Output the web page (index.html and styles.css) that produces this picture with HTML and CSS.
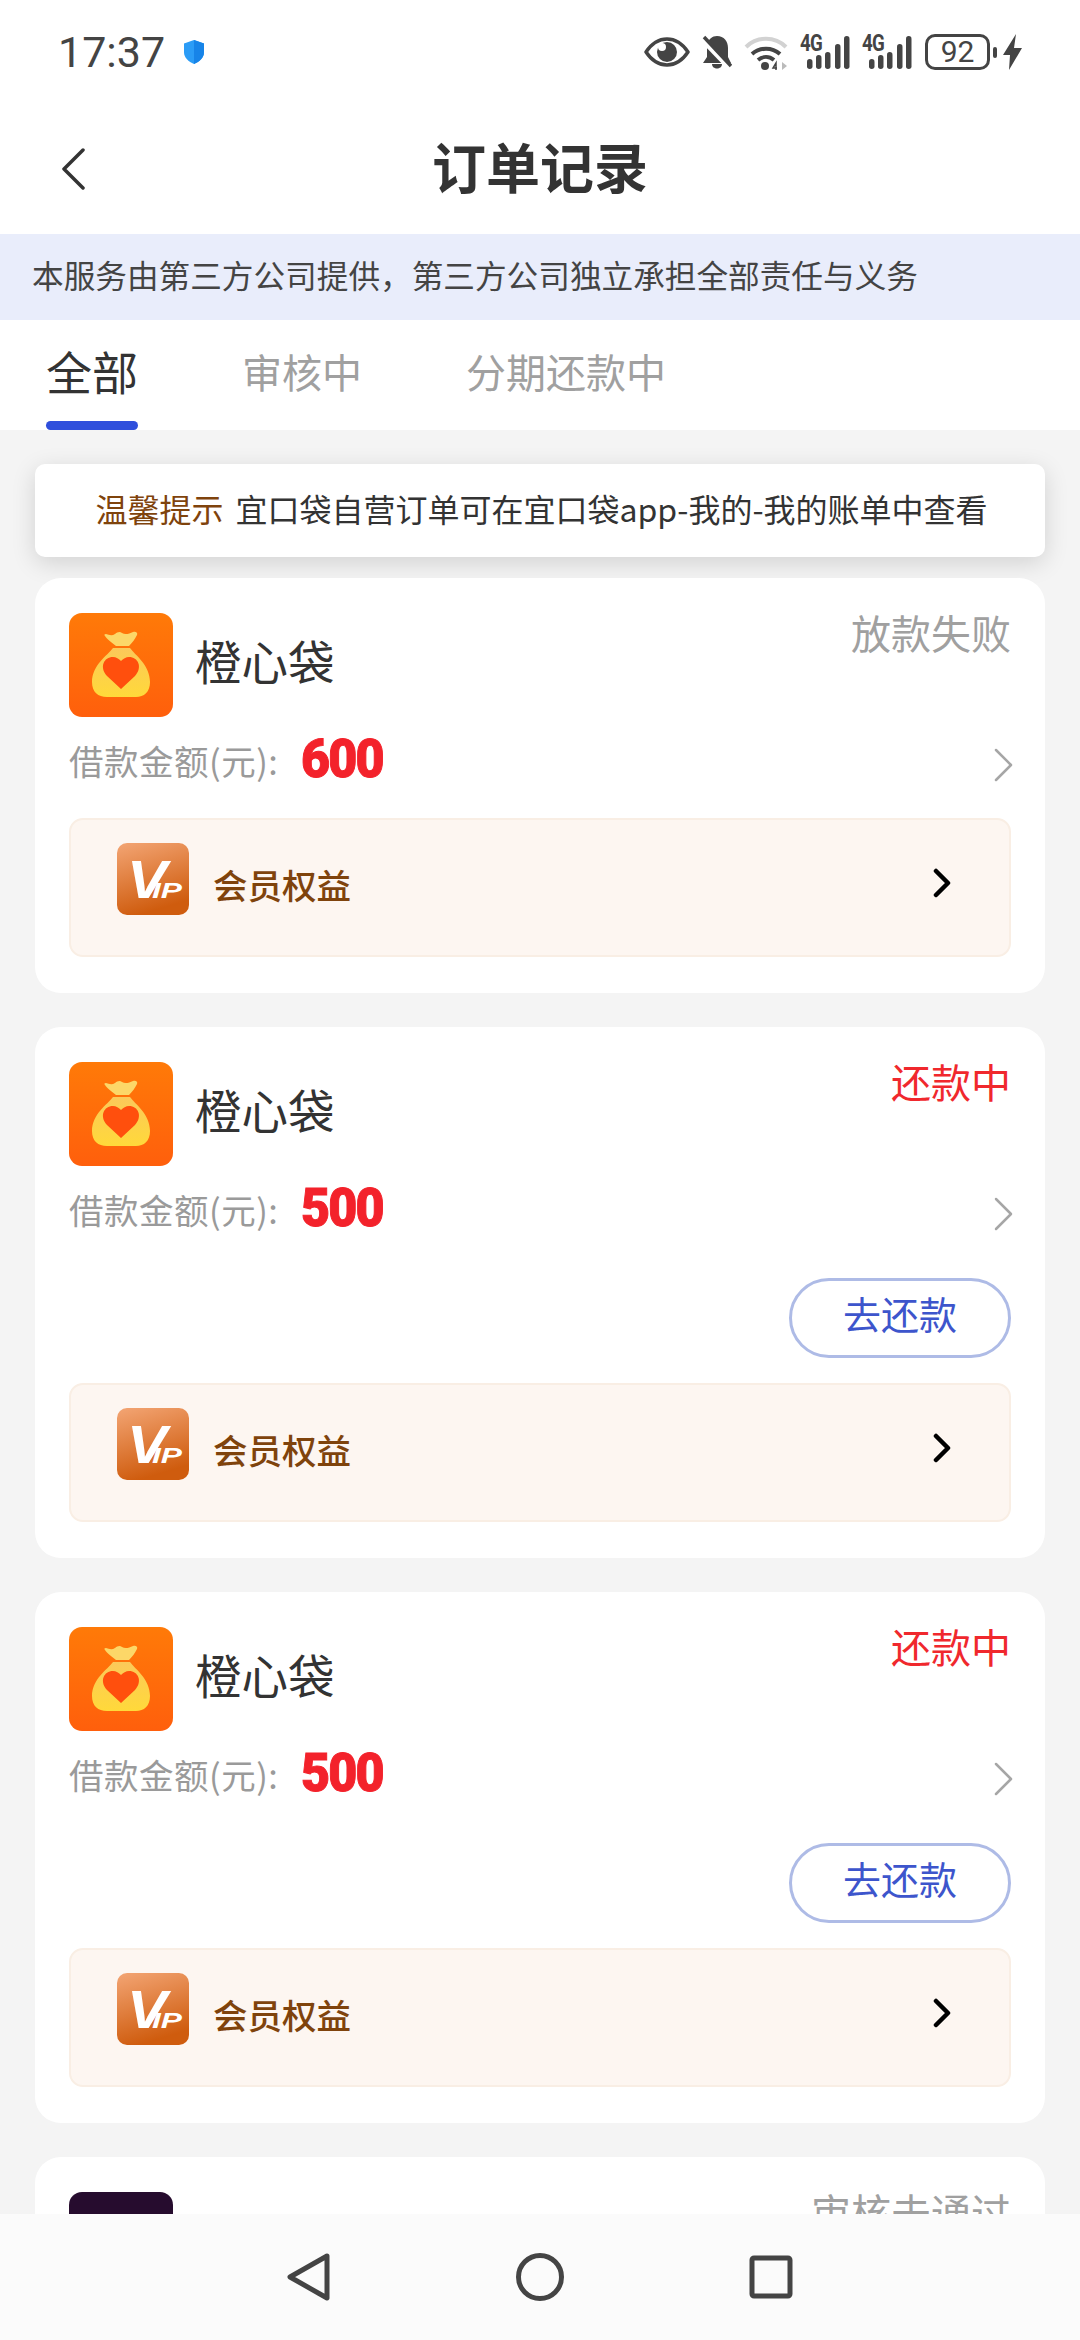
FILE: index.html
```html
<!DOCTYPE html>
<html lang="zh-CN">
<head>
<meta charset="utf-8">
<title>订单记录</title>
<link rel="stylesheet" href="styles.css">
</head>
<body>
<svg class="defs" width="0" height="0" aria-hidden="true">
  <defs>
    <linearGradient id="bagBg" x1="0" y1="0" x2="0" y2="1"><stop offset="0" stop-color="#ff7a08"/><stop offset="1" stop-color="#ff5f0c"/></linearGradient>
    <linearGradient id="bagFill" x1="0" y1="0" x2="0" y2="1"><stop offset="0" stop-color="#fbc95a"/><stop offset="1" stop-color="#ffd93a"/></linearGradient>
    <linearGradient id="vipBg" x1="0" y1="0" x2="0.3" y2="1"><stop offset="0" stop-color="#f3a574"/><stop offset="1" stop-color="#cf5c0e"/></linearGradient>
    <symbol id="bag" viewBox="0 0 104 104">
      <rect width="104" height="104" rx="13" fill="url(#bagBg)"/>
      <path d="M37 21c3 1 6 2 9 0 2-2 5-3 7-1 3 2 7 1 11-1 3-1 5 1 4 3-2 4-5 8-8 11H47c-4-3-9-7-11-10-1-1-1-2 1-2z" fill="#fcd768"/>
      <path d="M44 35h17c5 7 20 17 20 34 0 10-6 15-14 15H38c-9 0-15-5-15-15 0-17 16-27 21-34z" fill="url(#bagFill)"/>
      <path d="M52 76 38 63c-8-9-3-19 6-19 3 0 6 2 8 4 2-2 5-4 8-4 9 0 14 10 6 19z" fill="#ff4f0d"/>
    </symbol>
    <symbol id="vip" viewBox="0 0 72 72">
      <rect width="72" height="72" rx="10" fill="url(#vipBg)"/>
      <text class="vip-v" x="10" y="55" textLength="40" lengthAdjust="spacingAndGlyphs">V</text>
      <text class="vip-ip" x="35" y="55" textLength="30" lengthAdjust="spacingAndGlyphs">IP</text>
    </symbol>
  </defs>
</svg>

<div class="page">
  <header class="status">
    <div class="status-left">
      <span class="time">17:37</span>
      <svg class="shield" viewBox="0 0 22 24"><path d="M11 0l10 3.500v8.500c0 6-4.500 9.500-10 12C5.500 21.500 1 18 1 12V3.500z" fill="#2b9cf6"/><path d="M11 0l10 3.500v8.500c0 6-4.500 9.500-10 12z" fill="#1784e8"/></svg>
    </div>
    <div class="status-right">
      <svg class="ic-eye" viewBox="0 0 46 30"><path d="M2 15C8 6 15 2 23 2s15 4 21 13c-6 9-13 13-21 13S8 24 2 15z" fill="none" stroke="#444" stroke-width="3.500" stroke-linejoin="round"/><circle cx="23" cy="15" r="10" fill="#444"/><circle cx="18" cy="10" r="4" fill="#fff"/></svg>
      <svg class="ic-bell" viewBox="0 0 30 34"><path d="M15 1c7 0 11 5 11 12v9l3 6H1l4-6V9c2-5 5-8 10-8z" fill="#444"/><path d="M10 29h10c0 6-10 6-10 0z" fill="#444"/><path d="M0 5l26 27" stroke="#fff" stroke-width="4"/><path d="M2 2l27 29" stroke="#444" stroke-width="3.500"/></svg>
      <svg class="ic-wifi" viewBox="0 0 44 36"><path d="M2 13C13 2 31 2 42 13" fill="none" stroke="#d2d2d2" stroke-width="4"/><path d="M8 20c8-7 20-7 28 0" fill="none" stroke="#444" stroke-width="4"/><path d="M14 26c5-4 11-4 16 0" fill="none" stroke="#444" stroke-width="4"/><circle cx="21" cy="32" r="4" fill="#444"/><path d="M32 36v-7l-3 5h4" fill="none" stroke="#444" stroke-width="1.500"/><path d="M38 28l5 4-5 4z" fill="#bbb"/></svg>
      <div class="signal"><span class="net">4G</span><svg viewBox="0 0 50 35"><g fill="#444"><rect x="7" y="24" width="5.500" height="10" rx="2.700"/><rect x="16" y="20" width="5.500" height="14" rx="2.700"/><rect x="25" y="17" width="5.500" height="17" rx="2.700"/><rect x="35" y="9" width="5.500" height="25" rx="2.700"/><rect x="44" y="1" width="5.500" height="33" rx="2.700"/></g></svg></div>
      <div class="signal"><span class="net">4G</span><svg viewBox="0 0 50 35"><g fill="#444"><rect x="7" y="24" width="5.500" height="10" rx="2.700"/><rect x="16" y="20" width="5.500" height="14" rx="2.700"/><rect x="25" y="17" width="5.500" height="17" rx="2.700"/><rect x="35" y="9" width="5.500" height="25" rx="2.700"/><rect x="44" y="1" width="5.500" height="33" rx="2.700"/></g></svg></div>
      <div class="battery"><span class="batt-num">92</span></div>
      <span class="batt-nub"></span>
      <svg class="ic-bolt" viewBox="0 0 19 36"><path d="M13 0 0 21h7l-1 15L19 14h-8z" fill="#444"/></svg>
    </div>
  </header>

  <div class="topbar">
    <svg class="back" viewBox="0 0 24 42"><path d="M22 2 3 21l19 19" fill="none" stroke="#333" stroke-width="3.500" stroke-linecap="round" stroke-linejoin="round"/></svg>
    <h1 class="title">订单记录</h1>
  </div>

  <div class="banner">本服务由第三方公司提供，第三方公司独立承担全部责任与义务</div>

  <nav class="tabs">
    <div class="tab tab-on">全部</div>
    <div class="tab tab-two">审核中</div>
    <div class="tab tab-three">分期还款中</div>
  </nav>

  <main class="list">
    <div class="notice"><span class="notice-key">温馨提示</span><span>宜口袋自营订单可在宜口袋app-我的-我的账单中查看</span></div>

    <section class="card">
      <div class="head">
        <svg class="logo"><use href="#bag"/></svg>
        <span class="name">橙心袋</span>
        <span class="state state-grey">放款失败</span>
      </div>
      <div class="amount">
        <span class="amount-label">借款金额(元):</span>
        <span class="amount-num">600</span>
        <svg class="more" viewBox="0 0 20 34"><path d="M2 2l15 15L2 32" fill="none" stroke="#a6a6a6" stroke-width="2.500" stroke-linecap="round" stroke-linejoin="round"/></svg>
      </div>
      <div class="perk">
        <svg class="vip"><use href="#vip"/></svg>
        <span class="perk-name">会员权益</span>
        <svg class="perk-go" viewBox="0 0 18 30"><path d="M3 3l12 12L3 27" fill="none" stroke="#000" stroke-width="4.500" stroke-linecap="round" stroke-linejoin="round"/></svg>
      </div>
    </section>

    <section class="card">
      <div class="head">
        <svg class="logo"><use href="#bag"/></svg>
        <span class="name">橙心袋</span>
        <span class="state state-red">还款中</span>
      </div>
      <div class="amount">
        <span class="amount-label">借款金额(元):</span>
        <span class="amount-num">500</span>
        <svg class="more" viewBox="0 0 20 34"><path d="M2 2l15 15L2 32" fill="none" stroke="#a6a6a6" stroke-width="2.500" stroke-linecap="round" stroke-linejoin="round"/></svg>
      </div>
      <div class="actions"><span class="pay">去还款</span></div>
      <div class="perk perk-tight">
        <svg class="vip"><use href="#vip"/></svg>
        <span class="perk-name">会员权益</span>
        <svg class="perk-go" viewBox="0 0 18 30"><path d="M3 3l12 12L3 27" fill="none" stroke="#000" stroke-width="4.500" stroke-linecap="round" stroke-linejoin="round"/></svg>
      </div>
    </section>

    <section class="card">
      <div class="head">
        <svg class="logo"><use href="#bag"/></svg>
        <span class="name">橙心袋</span>
        <span class="state state-red">还款中</span>
      </div>
      <div class="amount">
        <span class="amount-label">借款金额(元):</span>
        <span class="amount-num">500</span>
        <svg class="more" viewBox="0 0 20 34"><path d="M2 2l15 15L2 32" fill="none" stroke="#a6a6a6" stroke-width="2.500" stroke-linecap="round" stroke-linejoin="round"/></svg>
      </div>
      <div class="actions"><span class="pay">去还款</span></div>
      <div class="perk perk-tight">
        <svg class="vip"><use href="#vip"/></svg>
        <span class="perk-name">会员权益</span>
        <svg class="perk-go" viewBox="0 0 18 30"><path d="M3 3l12 12L3 27" fill="none" stroke="#000" stroke-width="4.500" stroke-linecap="round" stroke-linejoin="round"/></svg>
      </div>
    </section>

    <section class="card">
      <div class="head">
        <span class="logo logo-dark"></span>
        <span class="state state-grey">审核未通过</span>
      </div>
    </section>
  </main>

  <footer class="navbar">
    <svg class="nav-ic" viewBox="0 0 48 48"><path d="M42 3 5 24l37 21z" fill="none" stroke="#444" stroke-width="5" stroke-linejoin="round"/></svg>
    <svg class="nav-ic" viewBox="0 0 48 48"><circle cx="24" cy="24" r="21.500" fill="none" stroke="#444" stroke-width="5"/></svg>
    <svg class="nav-ic" viewBox="0 0 48 48"><rect x="5" y="5" width="38" height="38" rx="2" fill="none" stroke="#444" stroke-width="5"/></svg>
  </footer>
</div>
</body>
</html>
```

FILE: styles.css
```css
* { box-sizing: border-box; margin: 0; padding: 0; }
html, body { width: 1080px; height: 2340px; overflow: hidden; }
body { font-family: "Noto Sans CJK SC", "Noto Sans", sans-serif; background: #fff; color: #333; }
.defs { position: absolute; }
.page { width: 1080px; height: 2340px; display: flex; flex-direction: column; overflow: hidden; }

.status { height: 104px; flex: none; display: flex; justify-content: space-between; align-items: center; padding: 0 58px 0 58px; }
.status-left { display: flex; align-items: center; gap: 18px; }
.time { font-family: Roboto, sans-serif; font-size: 43px; line-height: 50px; color: #444; }
.shield { width: 22px; height: 24px; }
.status-right { display: flex; align-items: center; }
.ic-eye { width: 46px; height: 30px; margin-right: 12px; }
.ic-bell { width: 30px; height: 34px; margin-right: 12px; }
.ic-wifi { width: 44px; height: 36px; margin-right: 12px; }
.signal { position: relative; width: 50px; height: 35px; margin-right: 12px; }
.signal svg { display: block; width: 50px; height: 35px; }
.net { position: absolute; left: 0; top: -4px; font-family: Roboto, sans-serif; font-size: 24px; line-height: 24px; font-weight: 700; color: #444; letter-spacing: -1px; transform: scaleX(.78); transform-origin: left center; }
.battery { width: 65px; height: 36px; border: 3px solid #444; border-radius: 10px; display: flex; align-items: center; justify-content: center; margin-left: 1px; }
.batt-num { font-family: Roboto, sans-serif; font-size: 30px; line-height: 30px; color: #444; }
.batt-nub { width: 4px; height: 11px; background: #444; border-radius: 2px; margin: 0 6px 0 3px; }
.ic-bolt { width: 19px; height: 36px; }

.topbar { height: 130px; flex: none; position: relative; display: flex; align-items: center; justify-content: center; padding-bottom: 6px; }
.back { position: absolute; left: 61px; top: 44px; width: 24px; height: 42px; }
.title { font-size: 54px; line-height: 70px; font-weight: 700; color: #333; }

.banner { height: 86px; flex: none; background: #e9edfb; padding-left: 32px; font-size: 31.650px; line-height: 80px; color: #444; white-space: nowrap; }

.tabs { height: 110px; flex: none; display: flex; align-items: flex-start; padding-left: 46px; background: #fff; }
.tab { font-size: 40px; line-height: 60px; padding-top: 21px; color: #a0a0a0; white-space: nowrap; }
.tab-on { font-size: 46px; width: 92px; color: #333; padding-top: 20px; }
.tab-on::after { content: ""; display: block; height: 9px; margin-top: 21px; border-radius: 5px; background: #2f4fdc; }
.tab-two { margin-left: 104px; }
.tab-three { margin-left: 104px; }

.list { flex: 1; min-height: 0; overflow: hidden; background: #f4f4f4; padding: 34px 35px 0; display: flex; flex-direction: column; }
.notice { height: 93px; flex: none; background: #fff; border-radius: 10px; box-shadow: 0 6px 24px rgba(0,0,0,.14); display: flex; align-items: center; justify-content: center; gap: 12px; padding: 0 0 5px 3px; font-size: 32px; line-height: 44px; color: #333; white-space: nowrap; margin-bottom: 21px; }
.notice-key { color: #7f430c; }

.card { flex: none; background: #fff; border-radius: 26px; padding: 35px 34px 36px; margin-bottom: 34px; }
.head { height: 104px; display: flex; align-items: flex-start; }
.logo { width: 104px; height: 104px; flex: none; display: block; }
.logo-dark { background: #260c2e; border-radius: 13px; }
.name { margin-left: 22px; font-size: 46.500px; line-height: 94px; color: #333; }
.state { margin-left: auto; font-size: 40px; line-height: 38px; white-space: nowrap; }
.state-grey { color: #a0a0a0; }
.state-red { color: #f0282d; }

.amount { height: 60px; margin-top: 15px; display: flex; align-items: center; }
.amount-label { font-size: 34.500px; line-height: 56px; padding-bottom: 4px; letter-spacing: .5px; color: #9a9a9a; width: 232px; white-space: nowrap; }
.amount-num { font-family: Roboto, sans-serif; font-size: 54px; line-height: 54px; margin-bottom: 6px; font-weight: 900; letter-spacing: -2px; -webkit-text-stroke: 1px #f3222b; color: #f3222b; transform: scaleX(.93); transform-origin: left center; }
.more { width: 20px; height: 34px; margin: 6px -3px 0 auto; }

.actions { margin-top: 37px; display: flex; justify-content: flex-end; }
.pay { width: 222px; height: 80px; border: 3px solid #aebbe6; border-radius: 40px; font-size: 38px; line-height: 64px; text-align: center; color: #3d55cc; }

.perk { height: 139px; margin-top: 26px; background: #fdf6f1; border: 2px solid #f9eee4; border-radius: 14px; display: flex; align-items: flex-start; padding: 23px 58px 0 46px; }
.perk-tight { margin-top: 25px; }
.vip { width: 72px; height: 72px; flex: none; display: block; }
.vip-v { font-family: "Liberation Sans", sans-serif; font-size: 54px; font-weight: 700; font-style: italic; fill: #fff; }
.vip-ip { font-family: "Liberation Sans", sans-serif; font-size: 22px; font-weight: 700; font-style: italic; fill: #fff; }
.perk-name { margin-left: 24px; font-size: 34.500px; line-height: 44px; margin-top: 19px; font-weight: 500; color: #7f430c; }
.perk-go { width: 18px; height: 30px; margin-left: auto; margin-top: 25px; }

.navbar { height: 126px; flex: none; background: #fbfbfb; display: flex; justify-content: center; align-items: center; gap: 183px; }
.nav-ic { width: 48px; height: 48px; }
```
